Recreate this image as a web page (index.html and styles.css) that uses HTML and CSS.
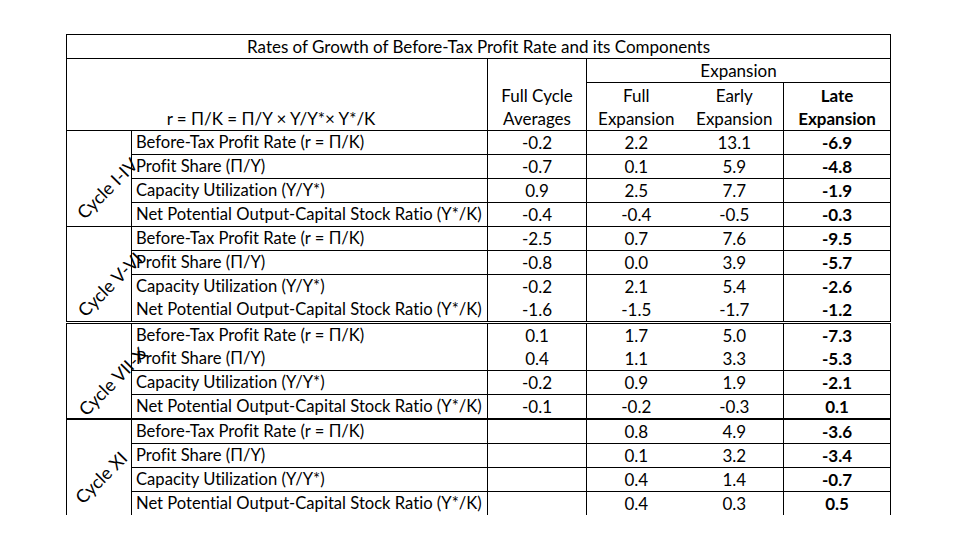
FILE: index.html
```html
<!DOCTYPE html>
<html>
<head>
<meta charset="utf-8">
<link rel="stylesheet" href="styles.css">
</head>
<body>
<div class="page">
<table class="grid">
  <colgroup>
    <col class="c-cycle"><col class="c-label"><col class="c-avg"><col class="c-full"><col class="c-early"><col class="c-late">
  </colgroup>
  <thead>
    <tr class="r-title"><td colspan="6" class="title">Rates of Growth of Before-Tax Profit Rate and its Components</td></tr>
    <tr class="r-exp">
      <td colspan="2" rowspan="2" class="formula">r = Π/K = Π/Y × Y/Y*× Y*/K</td>
      <td rowspan="2" class="head vl">Full Cycle<br>Averages</td>
      <td colspan="3" class="expansion vl">Expansion</td>
    </tr>
    <tr class="r-sub">
      <td class="head vl top">Full<br>Expansion</td>
      <td class="head top">Early<br>Expansion</td>
      <td class="head vl top bold">Late<br>Expansion</td>
    </tr>
  </thead>
  <tbody class="blk">
    <tr class="first"><td rowspan="4" class="cycle"><span class="rot">Cycle I-IV</span></td><td class="lab">Before-Tax Profit Rate (r = Π/K)</td><td class="num vl">-0.2</td><td class="num vl">2.2</td><td class="num">13.1</td><td class="num vl bold">-6.9</td></tr>
    <tr><td class="lab">Profit Share (Π/Y)</td><td class="num vl">-0.7</td><td class="num vl">0.1</td><td class="num">5.9</td><td class="num vl bold">-4.8</td></tr>
    <tr><td class="lab">Capacity Utilization (Y/Y*)</td><td class="num vl">0.9</td><td class="num vl">2.5</td><td class="num">7.7</td><td class="num vl bold">-1.9</td></tr>
    <tr><td class="lab">Net Potential Output-Capital Stock Ratio (Y*/K)</td><td class="num vl">-0.4</td><td class="num vl">-0.4</td><td class="num">-0.5</td><td class="num vl bold">-0.3</td></tr>
  </tbody>
  <tbody class="blk">
    <tr class="first"><td rowspan="4" class="cycle"><span class="rot">Cycle V-VI</span></td><td class="lab">Before-Tax Profit Rate (r = Π/K)</td><td class="num vl">-2.5</td><td class="num vl">0.7</td><td class="num">7.6</td><td class="num vl bold">-9.5</td></tr>
    <tr><td class="lab">Profit Share (Π/Y)</td><td class="num vl">-0.8</td><td class="num vl">0.0</td><td class="num">3.9</td><td class="num vl bold">-5.7</td></tr>
    <tr><td class="lab">Capacity Utilization (Y/Y*)</td><td class="num vl">-0.2</td><td class="num vl">2.1</td><td class="num">5.4</td><td class="num vl bold">-2.6</td></tr>
    <tr class="nol"><td class="lab">Net Potential Output-Capital Stock Ratio (Y*/K)</td><td class="num vl">-1.6</td><td class="num vl">-1.5</td><td class="num">-1.7</td><td class="num vl bold">-1.2</td></tr>
  </tbody>
  <tbody class="blk dbl">
    <tr class="first"><td rowspan="4" class="cycle"><span class="rot">Cycle VII-X</span></td><td class="lab">Before-Tax Profit Rate (r = Π/K)</td><td class="num vl">0.1</td><td class="num vl">1.7</td><td class="num">5.0</td><td class="num vl bold">-7.3</td></tr>
    <tr class="nol"><td class="lab">Profit Share (Π/Y)</td><td class="num vl">0.4</td><td class="num vl">1.1</td><td class="num">3.3</td><td class="num vl bold">-5.3</td></tr>
    <tr><td class="lab">Capacity Utilization (Y/Y*)</td><td class="num vl">-0.2</td><td class="num vl">0.9</td><td class="num">1.9</td><td class="num vl bold">-2.1</td></tr>
    <tr><td class="lab">Net Potential Output-Capital Stock Ratio (Y*/K)</td><td class="num vl">-0.1</td><td class="num vl">-0.2</td><td class="num">-0.3</td><td class="num vl bold">0.1</td></tr>
  </tbody>
  <tbody class="blk thick">
    <tr class="first"><td rowspan="4" class="cycle"><span class="rot">Cycle XI</span></td><td class="lab">Before-Tax Profit Rate (r = Π/K)</td><td class="num vl"></td><td class="num vl">0.8</td><td class="num">4.9</td><td class="num vl bold">-3.6</td></tr>
    <tr><td class="lab">Profit Share (Π/Y)</td><td class="num vl"></td><td class="num vl">0.1</td><td class="num">3.2</td><td class="num vl bold">-3.4</td></tr>
    <tr><td class="lab">Capacity Utilization (Y/Y*)</td><td class="num vl"></td><td class="num vl">0.4</td><td class="num">1.4</td><td class="num vl bold">-0.7</td></tr>
    <tr><td class="lab">Net Potential Output-Capital Stock Ratio (Y*/K)</td><td class="num vl"></td><td class="num vl">0.4</td><td class="num">0.3</td><td class="num vl bold">0.5</td></tr>
  </tbody>
</table>
</div>
</body>
</html>
```

FILE: styles.css
```css
html, body {
  margin: 0;
  padding: 0;
  background: #ffffff;
}

.page {
  width: 960px;
  height: 540px;
  overflow: hidden;
  padding: 34px 0 0 66px;
  box-sizing: border-box;
  font-family: "Lato", "Noto Sans", sans-serif;
  font-size: 17px;
  font-variant-ligatures: none;
  color: #000;
}

.grid {
  border-collapse: collapse;
  table-layout: fixed;
  width: 824px;
  border-left: 1px solid #000;
  border-right: 1px solid #000;
  border-top: 1px solid #000;
}

.c-cycle { width: 65px; }
.c-label { width: 356px; }
.c-avg { width: 99px; }
.c-full { width: 99px; }
.c-early { width: 98px; }
.c-late { width: 107px; }

td {
  padding: 0;
  line-height: 23px;
  white-space: nowrap;
}

.vl { border-left: 1px solid #000; }
.top { border-top: 1px solid #000; }
.bold { font-weight: 700; }

.r-title td { height: 23px; }
.title {
  text-align: center;
  border-bottom: 1px solid #000;
}

.r-exp td { height: 23px; }
.expansion { text-align: center; }

.r-sub td { height: 47px; }
.head {
  text-align: center;
  vertical-align: bottom;
}
.formula {
  text-align: center;
  vertical-align: bottom;
  padding-left: 0;
  padding-right: 12px;
}

.blk tr td { height: 23px; }
.blk tr td.lab,
.blk tr td.num { border-top: 1px solid #000; }
.blk tr.first td { border-top: 1px solid #000; }
.blk tr.nol td.lab,
.blk tr.nol td.num { border-top: none; }

.dbl tr.first td { border-top: 3px double #000; }
.thick tr.first td { border-top: 2px solid #000; }

.lab {
  border-left: 1px solid #000;
  padding-left: 4px;
  text-align: left;
  font-size: 16.6px;
}

.num { text-align: center; }

.cycle {
  text-align: center;
  vertical-align: middle;
  overflow: visible;
}

.rot {
  display: inline-block;
  font-size: 18px;
  white-space: nowrap;
  transform: translate(2px, 10px) rotate(-45deg);
}
```
